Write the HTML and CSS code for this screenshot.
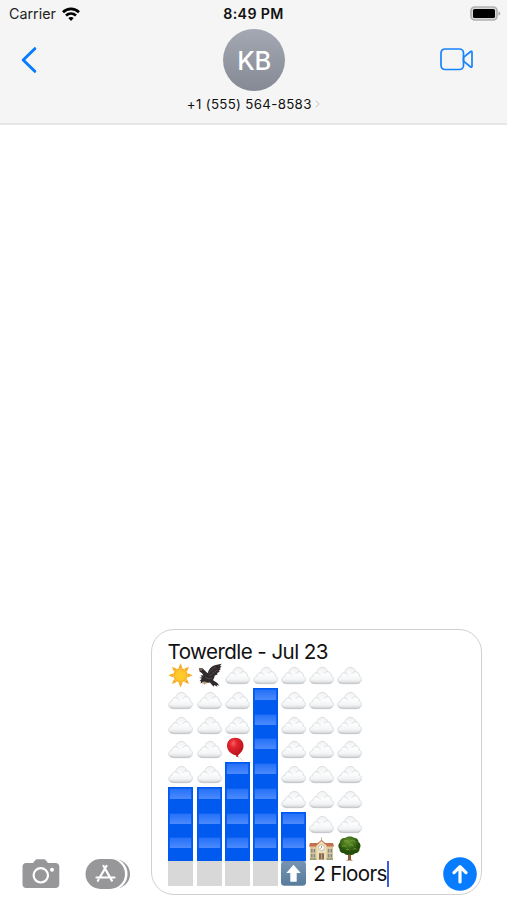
FILE: index.html
```html
<!DOCTYPE html>
<html lang="en">
<head>
<meta charset="utf-8">
<title>Messages</title>
<link rel="stylesheet" href="styles.css">
</head>
<body>
<svg class="defs" aria-hidden="true">
  <defs>
    <linearGradient id="cloud-fill" x1="0" y1="0" x2="0" y2="1">
      <stop offset="0" stop-color="#eff1f3"/><stop offset=".45" stop-color="#fcfdfd"/><stop offset=".75" stop-color="#f3f4f5"/><stop offset="1" stop-color="#d4d7d9"/>
    </linearGradient>
    <linearGradient id="shine" x1="0" y1="0" x2="0" y2="1">
      <stop offset="0" stop-color="#2571f8"/><stop offset="1" stop-color="#4b8afd"/>
    </linearGradient>
    <radialGradient id="sun-fill"><stop offset="0" stop-color="#ffcf2d"/><stop offset=".7" stop-color="#ffc52b"/><stop offset="1" stop-color="#f5a91d"/></radialGradient>
    <radialGradient id="balloon-fill" cx=".38" cy=".3" r=".75"><stop offset="0" stop-color="#fa6062"/><stop offset=".3" stop-color="#e2242e"/><stop offset="1" stop-color="#b50c19"/></radialGradient>
    <radialGradient id="leaf-fill" cx=".45" cy=".3"><stop offset="0" stop-color="#69992d"/><stop offset="1" stop-color="#244f0a"/></radialGradient>
    <linearGradient id="arrow-fill" x1="0" y1="0" x2="0" y2="1"><stop offset="0" stop-color="#7795b2"/><stop offset="1" stop-color="#577b9c"/></linearGradient>
    <symbol id="cloud" viewBox="0 0 25 24.7">
      <path d="M6 20.700C2.600 20.700.7 19.200.7 16.900c0-2 1.300-3.500 3.300-3.800.1-2.300 1.600-3.600 3.600-3.400C8.300 6.300 10.500 4.400 13.300 4.400c2.700 0 4.700 1.600 5.300 4.200 2.300.1 3.800 1.800 3.500 4.200 1.400.6 2.300 1.900 2.300 3.600 0 2.700-2.200 4.300-5.400 4.300z" fill="url(#cloud-fill)" stroke="#d3d6d9" stroke-width=".8"/>
      <path d="M2.200 19c1 .9 2.400 1.300 3.800 1.300h13c1.700 0 3.200-.4 4.200-1.500" fill="none" stroke="#c3c6c9" stroke-width="1"/>
      <path d="M7.600 9.900c2 0 3.200 1 3.600 2.600m7.200-3.900c-1.900.1-3 .9-3.700 2.200" fill="none" stroke="#d9dcdf" stroke-width=".9"/>
    </symbol>
    <symbol id="block" viewBox="0 0 25 24.7" preserveAspectRatio="none">
      <path d="M0 0h25v25.300H0z" fill="#005af0"/><path d="M1.800 1.700h21.400v10.300H1.800z" fill="url(#shine)"/>
    </symbol>
    <symbol id="sun" viewBox="0 0 25 24.7">
      <path d="m12.500.2 2.200 5.200h-4.400zm0 24.300 2.200-5.200h-4.400zM.3 12.300l5.200-2.200v4.400zm24.400 0-5.200-2.200v4.400zM3.900 3.700l5.100 2.100-3 3zm17.200 0-5.100 2.100 3 3zM3.900 21l5.100-2.100-3-3zm17.200 0-5.100-2.100 3-3z" fill="#f6ad26"/>
      <circle cx="12.500" cy="12.300" r="7.100" fill="url(#sun-fill)"/>
    </symbol>
    <symbol id="eagle" viewBox="0 0 25 24.7">
      <path d="M2 5.500c1.800-1 4-.4 5 1.100l3.600 3.600c1-3.900 3.400-6.700 7-8.100l7-1.500-1.800 2.600 1.800-.3-2 2.700 1.500.1-2.400 2.200 1.100.5-2.800 1.800.7.900-3.200 1.600c.1 1.700-.6 3.200-1.700 4.300l4.600 2.900 2 2.800-2.600-.9.700 2-3.300-1.900-.6 1.700-3.700-4.200c-2.200.6-4.600.2-6.300-.7l-3 1.700.5-2.300-1.600.1 2.200-2.400-2.400-1 3-.6-1.900-1.800 3-.1-1.400-2.200-2.400-1.600z" fill="#302a2c"/>
      <path d="m11 10.500 8-7m-6.800 9.300 8.600-6.200M8 14l4 2 3-1" fill="none" stroke="#594e51" stroke-width=".8"/>
      <path d="M1.700 6.500c1-1.500 3-1.500 4-.2l-1 1.400-1.800-.5z" fill="#816c5e"/><path d="m7 18.500-2 2.600 1.800-.6.200 1.800 1.100-1.900 1.600 1.100-.8-2.700z" fill="#b89b63"/>
    </symbol>
    <symbol id="balloon" viewBox="0 0 25 24.7">
      <path d="M12.700 18.700c.5 3 3 1.600 5 5.400" fill="none" stroke="#d5c7c7" stroke-width=".7"/>
      <path d="M10.200.6c4.800 0 8.300 3.500 8.300 8 0 4.600-3.400 8-5.700 9.600l.8 1.500-2.600.1.300-1.500C6.500 17.500 2 13.900 2 8.700 2 4 5.400.6 10.200.6z" fill="url(#balloon-fill)"/>
    </symbol>
    <symbol id="school" viewBox="0 0 25 24.7">
      <path d="M1 10h23v13.500H1z" fill="#ddc797"/><path d="M1 7h23l1 3.500H0z" fill="#c66e50"/>
      <path d="M7.500 9.200 12.500 5l5 4.200v14.300h-10z" fill="#eddfba"/><path d="m6.700 9.400 5.800-5 5.800 5" fill="none" stroke="#c07858" stroke-width="1.100"/><path d="M12.500 1.500v3.500" stroke="#b38d70" stroke-width=".7"/>
      <circle cx="12.500" cy="11.600" r="2.900" fill="#fff" stroke="#b5a684" stroke-width=".7"/><path d="M12.500 9.900v1.900l-1.200.6" fill="none" stroke="#555" stroke-width=".6"/>
      <path d="M2 13h1.600v3.500H2zm2.600 0h1.600v3.500H4.600zM2 18h1.600v3.500H2zm2.600 0h1.600v3.500H4.600zM18.800 13h1.600v3.500h-1.600zm2.700 0h1.600v3.500h-1.600zm-2.700 5h1.600v3.500h-1.600zm2.700 0h1.600v3.500h-1.600z" fill="#7e8d8d"/><path d="M10 17.200h5v6.300h-5z" fill="#8b6a53"/><path d="M12.500 17.200v6.300" stroke="#e3cda3" stroke-width=".6"/>
      <path d="M1 23h6.500m10 0H24" stroke="#7c8a5c" stroke-width="1.300"/>
    </symbol>
    <symbol id="tree" viewBox="0 0 25 24.7">
      <path d="m8 14 3 4v5.500l-2 1h7l-2-1V18l4-4z" fill="#895a36"/>
      <path d="M8 2C10-.1 14.800-.1 17 1.700c3.200.1 4.700 2.200 4.500 4.300 2.300 1.500 2.600 4.500 1.200 6.500-.1 3-2.500 5-4.700 4.700-1.500 1.900-3.700 2.300-5.300.9-1.800 1.400-4.400.8-5.700-.8-2.600.2-4.500-1.900-4.500-4.300C.8 11 1 7.800 3 6.300 2.700 4 5 1.900 8 2z" fill="url(#leaf-fill)"/>
      <path d="M7 5.500c1.500-1.600 3.500-1 4.200.3M14 4.500c2-1 4 .2 4 2M5 10.500c1.500-1.700 3.500-1 4.300.5m3-1.500c1.500-1.500 3.500-.7 4.200.7M9 14c1-1 2.500-1 3.500.2m3.500-.5c1-1.500 2.500-1.300 3.500-.3" fill="none" stroke="#82a540" stroke-width=".9"/>
    </symbol>
    <symbol id="up" viewBox="0 0 25 24.7">
      <rect x="0" y="0" width="25" height="24.700" rx="3.500" fill="url(#arrow-fill)"/><path d="m12.500 3.700 7.200 8.300h-4v8.700H9.300V12h-4z" fill="#fff"/>
    </symbol>
  </defs>
</svg>
<div class="phone">
  <header class="top">
    <div class="status">
      <div class="carrier">Carrier
        <svg class="wifi" viewBox="0 0 18 14"><g fill="none" stroke="#000" stroke-width="2.700"><path d="M1 5.200c4.600-4.300 11.400-4.300 16 0"/><path d="M4 8.600c3-2.700 7-2.700 10 0"/></g><path d="M6.300 11.100c1.600-1.400 3.800-1.400 5.400 0L9 13.900z"/></svg>
      </div>
      <div class="time">8:49 PM</div>
      <svg class="battery" viewBox="0 0 31 15"><rect x="1" y="1" width="26" height="13" rx="3.700" fill="#d8d7d5" stroke="#b3b1af" stroke-width="1.700"/><rect x="3" y="3" width="22" height="9" rx="1.600"/><path d="M28.500 5.500c2.300.5 2.300 3.500 0 4z" fill="#aaa8a6"/></svg>
    </div>
    <div class="nav">
      <svg class="back" viewBox="0 0 16 26"><path d="M13.800 1.700 2.200 13l11.600 11.300" fill="none" stroke="#087cff" stroke-width="3" stroke-linecap="round" stroke-linejoin="round"/></svg>
      <div class="avatar">KB</div>
      <svg class="video" viewBox="0 0 34 23"><g fill="none" stroke="#1683fb" stroke-width="1.700" stroke-linejoin="round"><rect x="1" y="1" width="22.500" height="20.500" rx="4"/><path d="M23.500 9.300 30.700 3.500c.7-.5 1.300-.2 1.300.7v14.100c0 .9-.6 1.200-1.300.7l-7.200-5.800z"/></g></svg>
    </div>
    <div class="contact">+1 (555) 564-8583<svg class="chevron" viewBox="0 0 6 10"><path d="m1 1 4 4-4 4" fill="none" stroke="#c2c2c4" stroke-width="1.200"/></svg></div>
  </header>
  <main class="thread"></main>
  <footer class="composer">
    <svg class="camera" viewBox="0 0 38 30"><path d="M4 4h7l2-2.500C13.600.700 14.200.300 15 .300h7c.8 0 1.400.4 2 1.200L26 4h7.500c2.300 0 3.800 1.500 3.800 3.800v17.400c0 2.300-1.500 3.800-3.800 3.800H4.300C2 29 .5 27.500.5 25.200V7.800C.5 5.500 2 4 4 4z" fill="#97979a"/><circle cx="18.800" cy="16.300" r="7.200" fill="none" stroke="#fff" stroke-width="2.200"/><circle cx="30" cy="10.700" r="2" fill="#fff"/></svg>
    <svg class="apps" viewBox="0 0 46 30"><rect x="5" y=".5" width="40" height="29" rx="14.500" fill="#97979a"/><rect x="3" y="-.8" width="39.500" height="31.600" rx="15.500" fill="#fff"/><rect x=".5" y="0" width="39.500" height="30" rx="15" fill="#97979a"/><path d="m18.500 7 8.400 14.600M21.500 7l-6.800 11.500M11.500 18.500H23m3.500 0h3M13.500 20.800l-.6 1" fill="none" stroke="#fff" stroke-width="2.200" stroke-linecap="round"/></svg>
    <div class="bubble">
      <div class="title">Towerdle - Jul 23</div>
      <div class="tower">
        <svg><use href="#sun"/></svg><svg><use href="#eagle"/></svg><svg><use href="#cloud"/></svg><svg><use href="#cloud"/></svg><svg><use href="#cloud"/></svg><svg><use href="#cloud"/></svg><svg><use href="#cloud"/></svg>
        <svg><use href="#cloud"/></svg><svg><use href="#cloud"/></svg><svg><use href="#cloud"/></svg><svg><use href="#block"/></svg><svg><use href="#cloud"/></svg><svg><use href="#cloud"/></svg><svg><use href="#cloud"/></svg>
        <svg><use href="#cloud"/></svg><svg><use href="#cloud"/></svg><svg><use href="#cloud"/></svg><svg><use href="#block"/></svg><svg><use href="#cloud"/></svg><svg><use href="#cloud"/></svg><svg><use href="#cloud"/></svg>
        <svg><use href="#cloud"/></svg><svg><use href="#cloud"/></svg><svg><use href="#balloon"/></svg><svg><use href="#block"/></svg><svg><use href="#cloud"/></svg><svg><use href="#cloud"/></svg><svg><use href="#cloud"/></svg>
        <svg><use href="#cloud"/></svg><svg><use href="#cloud"/></svg><svg><use href="#block"/></svg><svg><use href="#block"/></svg><svg><use href="#cloud"/></svg><svg><use href="#cloud"/></svg><svg><use href="#cloud"/></svg>
        <svg><use href="#block"/></svg><svg><use href="#block"/></svg><svg><use href="#block"/></svg><svg><use href="#block"/></svg><svg><use href="#cloud"/></svg><svg><use href="#cloud"/></svg><svg><use href="#cloud"/></svg>
        <svg><use href="#block"/></svg><svg><use href="#block"/></svg><svg><use href="#block"/></svg><svg><use href="#block"/></svg><svg><use href="#block"/></svg><svg><use href="#cloud"/></svg><svg><use href="#cloud"/></svg>
        <svg><use href="#block"/></svg><svg><use href="#block"/></svg><svg><use href="#block"/></svg><svg><use href="#block"/></svg><svg><use href="#block"/></svg><svg><use href="#school"/></svg><svg><use href="#tree"/></svg>
        <i class="ground"></i><i class="ground"></i><i class="ground"></i><i class="ground"></i><svg><use href="#up"/></svg><div class="floors"><span class="count">2 Floors</span><i class="caret"></i></div>
      </div>
      <svg class="send" viewBox="0 0 34 34"><circle cx="17" cy="17" r="16.800" fill="#087cff"/><path d="M17 25V10m-6 5.600 6-6 6 6" fill="none" stroke="#fff" stroke-width="3.200" stroke-linecap="round" stroke-linejoin="round"/></svg>
    </div>
  </footer>
</div>
</body>
</html>
```
FILE: styles.css
```css
* { box-sizing: border-box; }
body { margin: 0; background: #fff; color: #111; font-family: Inter, "Liberation Sans", sans-serif; }
svg { display: block; overflow: visible; }
symbol { overflow: visible; }
.defs { position: absolute; width: 0; height: 0; }
.phone { width: 507px; height: 900px; display: flex; flex-direction: column; overflow: hidden; }
.top { height: 125px; flex: none; background: #f5f5f5; border-bottom: 2px solid #e6e6e6; }
.status { height: 28px; display: grid; grid-template-columns: 1fr auto 1fr; align-items: center; padding: 0 6px 1px 9px; }
.carrier { display: flex; align-items: center; gap: 6px; font-size: 14.3px; color: #222; }
.wifi { width: 18px; height: 14px; }
.time { font-size: 14.2px; font-weight: 600; letter-spacing: .35px; margin-right: 3px; }
.battery { width: 31px; height: 15px; justify-self: end; }
.nav { height: 63px; display: grid; grid-template-columns: 1fr 62px 1fr; align-items: center; padding: 0 20px 0 21px; }
.back { width: 16px; height: 26px; }
.avatar { width: 62px; height: 62px; border-radius: 50%; background: linear-gradient(#a4a8b3, #858993); color: #fff; font-size: 25.5px; font-weight: 500; letter-spacing: -.5px; padding-top: 2px; display: flex; align-items: center; justify-content: center; }
.video { width: 34px; height: 23px; justify-self: end; margin-right: 13px; }
.contact { height: 26px; display: flex; align-items: center; justify-content: center; gap: 3.5px; font-size: 13.3px; letter-spacing: .32px; }
.chevron { width: 5px; height: 10px; }
.thread { flex: 1; }
.composer { flex: none; display: flex; align-items: flex-end; padding: 0 24px 5px 22px; }
.camera { width: 38px; height: 30px; margin-bottom: 6px; }
.apps { width: 46px; height: 30px; margin: 0 20px 6px 25px; }
.bubble { width: 331px; height: 266px; border: 1.5px solid #d0d0d2; border-radius: 23px; padding: 9px 4px 3px 16.4px; display: grid; grid-template-columns: 1fr 34px; grid-template-rows: 24.2px 1fr; }
.title { grid-column: 1 / 3; font-size: 20.6px; letter-spacing: -.58px; line-height: 25.4px; margin-left: -.8px; white-space: nowrap; }
.tower { display: grid; grid-template-columns: repeat(7, 25px); grid-template-rows: repeat(9, 24.75px); column-gap: 3.17px; align-content: start; }
.tower svg { width: 25px; height: 24.75px; }
.ground { background: #d8d8d8; }
.floors { grid-column: 6 / 8; display: flex; align-items: center; padding-left: 4px; white-space: nowrap; }
.count { font-size: 20.6px; letter-spacing: -.65px; line-height: 24px; padding-top: 1px; }
.caret { width: 2px; height: 26px; flex: none; background: #3e5ce0; }
.send { width: 34px; height: 34px; align-self: end; }
```
